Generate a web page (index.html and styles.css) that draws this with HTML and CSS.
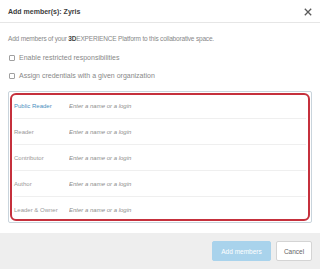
FILE: index.html
```html
<!DOCTYPE html>
<html lang="en">

<head>
    <meta charset="UTF-8">
    <meta name="viewport" content="width=device-width, initial-scale=1.0">
    <title>Add members</title>
    <link rel="stylesheet" href="styles.css">
</head>

<body>
    <div class="modal">
        <div class="modal-header">
            <h1>Add member(s): Zyris</h1>
            <svg class="close" width="8" height="8" viewBox="0 0 8 8">
                <path d="M0.8 0.8 L7.2 7.2 M7.2 0.8 L0.8 7.2" stroke="#5a5a5a" stroke-width="1.3" fill="none" />
            </svg>
        </div>

        <div class="modal-body">
            <p class="intro">Add members of your <b>3D</b>EXPERIENCE Platform to this collaborative space.</p>

            <label class="check-row">
                <span class="box"></span>
                Enable restricted responsibilities
            </label>
            <label class="check-row">
                <span class="box"></span>
                Assign credentials with a given organization
            </label>

            <div class="roles">
                <div class="role-row">
                    <span class="role-name active">Public Reader</span>
                    <input type="text" placeholder="Enter a name or a login">
                </div>
                <div class="role-row">
                    <span class="role-name">Reader</span>
                    <input type="text" placeholder="Enter a name or a login">
                </div>
                <div class="role-row">
                    <span class="role-name">Contributor</span>
                    <input type="text" placeholder="Enter a name or a login">
                </div>
                <div class="role-row">
                    <span class="role-name">Author</span>
                    <input type="text" placeholder="Enter a name or a login">
                </div>
                <div class="role-row">
                    <span class="role-name">Leader &amp; Owner</span>
                    <input type="text" placeholder="Enter a name or a login">
                </div>
            </div>
        </div>

        <div class="modal-footer">
            <button class="btn btn-primary">Add members</button>
            <button class="btn">Cancel</button>
        </div>
    </div>
</body>

</html>
```

FILE: styles.css
```css
* {
    box-sizing: border-box;
    margin: 0;
    padding: 0;
}

body {
    font-family: "Liberation Sans", Arial, Helvetica, sans-serif;
    background-color: #ffffff;
    color: #888;
}

.modal {
    width: 320px;
    height: 269px;
    display: flex;
    flex-direction: column;
}

.modal-header {
    height: 23px;
    display: flex;
    align-items: center;
    justify-content: space-between;
    padding: 1px 8px 0 8px;
    border-bottom: 1px solid #e6e6e6;
}

.modal-header h1 {
    font-size: 7px;
    font-weight: bold;
    color: #3d3d3d;
}

.close {
    display: block;
    margin-right: 0;
}

.modal-body {
    flex: 1;
    padding: 12px 8px 0 8px;
}

.intro {
    font-size: 6.5px;
    letter-spacing: -0.18px;
    line-height: 8px;
    color: #888;
}

.intro b {
    color: #444;
}

.check-row {
    display: flex;
    align-items: center;
    gap: 4px;
    font-size: 7px;
    line-height: 8px;
    color: #888;
    margin-top: 11px;
}

.check-row + .check-row {
    margin-top: 10px;
}

.box {
    width: 6px;
    height: 6px;
    border: 1px solid #a0a0a0;
    border-radius: 1px;
    margin-left: 1px;
}

.roles {
    position: relative;
    margin-top: 11px;
    border: 1px solid #c9d4dc;
    border-radius: 2px;
    padding: 1px 5px 0 5px;
}

/* highlight drawn over the role list */
.roles::after {
    content: "";
    position: absolute;
    top: 1px;
    left: 1px;
    right: 1px;
    bottom: 1px;
    border: 2px solid #c5303c;
    border-radius: 6px;
    pointer-events: none;
}

.role-row {
    height: 26px;
    display: flex;
    align-items: center;
    border-bottom: 1px solid #efefef;
}

.role-row:last-child {
    height: 25px;
    border-bottom: none;
}

.role-name {
    width: 55px;
    font-size: 6px;
    color: #999;
}

.role-name.active {
    color: #4a90c0;
}

.role-row input {
    border: none;
    outline: none;
    font-family: inherit;
    font-size: 6px;
    font-style: italic;
    background: transparent;
    width: 150px;
}

.role-row input::placeholder {
    color: #8c8c8c;
}

.modal-footer {
    height: 36px;
    background-color: #eeeeee;
    display: flex;
    align-items: center;
    justify-content: flex-end;
    gap: 5px;
    padding: 0 8px;
}

.btn {
    height: 20px;
    width: 36px;
    font-family: inherit;
    font-size: 6.5px;
    color: #666;
    background-color: #ffffff;
    border: 1px solid #d4d4d4;
    border-radius: 2px;
}

.btn-primary {
    width: 59px;
    color: #ffffff;
    background-color: #a9d3ec;
    border-color: #a9d3ec;
}
```
